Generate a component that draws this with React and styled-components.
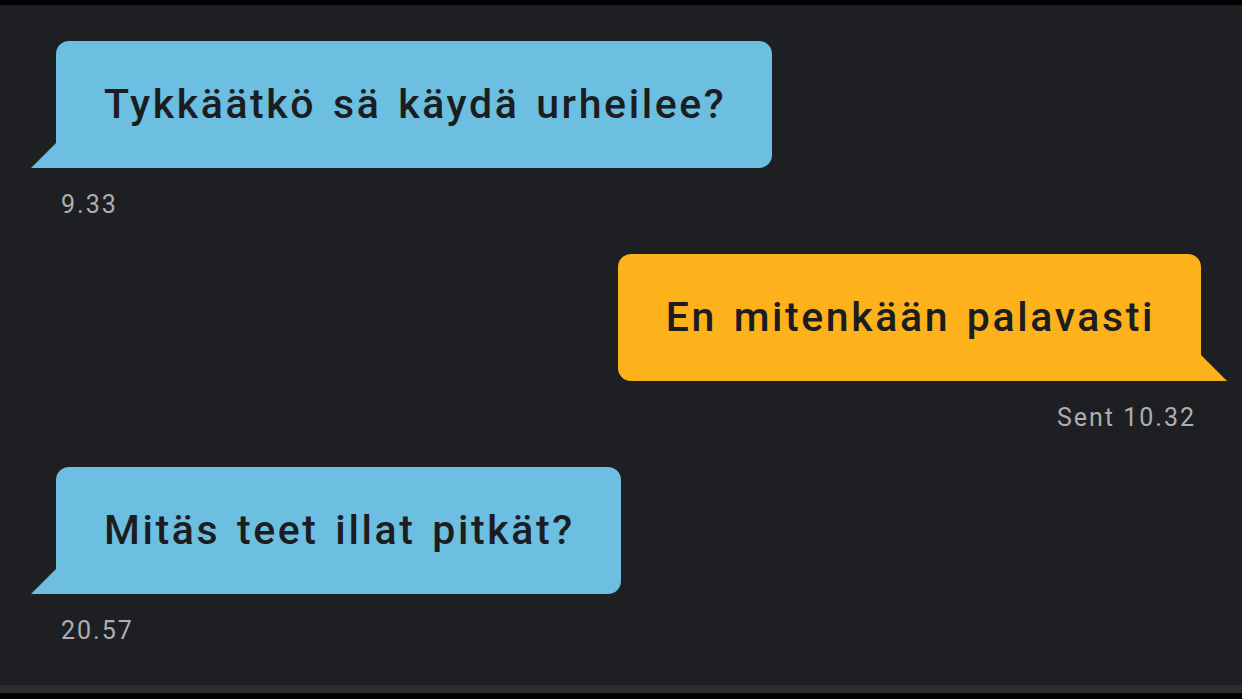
import styled, { createGlobalStyle } from "styled-components";

const GlobalStyle = createGlobalStyle`
    html, body {
        margin: 0;
        padding: 0;
        background: #000;
    }
`

const messages = [
    { id: 1, text: "Tykkäätkö sä käydä urheilee?", time: "9.33", mine: false },
    { id: 2, text: "En mitenkään palavasti", time: "Sent 10.32", mine: true },
    { id: 3, text: "Mitäs teet illat pitkät?", time: "20.57", mine: false },
];

const App = () => {
    return (
        <>
            <GlobalStyle />
            <Screen>
                <Thread>
                    {messages.map((m) => (
                        <Group key={m.id} $mine={m.mine}>
                            <Bubble $mine={m.mine}>{m.text}</Bubble>
                            <Meta>{m.time}</Meta>
                        </Group>
                    ))}
                </Thread>
                <Composer />
            </Screen>
        </>
    );
}

export default App;

const blue = "#6cbfe0";
const yellow = "#fdb21b";

const Screen = styled.div`
    display: flex;
    flex-direction: column;
    width: 1242px;
    height: 699px;
    box-sizing: border-box;
    border-top: 5px solid #000;
    background-color: #1d1f22;
    font-family: Roboto, "DejaVu Sans", sans-serif;
`

const Thread = styled.main`
    flex: 1;
    display: flex;
    flex-direction: column;
    gap: 34px;
    padding: 36px 41px 0 56px;
`

const Group = styled.section`
    display: flex;
    flex-direction: column;
    align-items: ${(p) => (p.$mine ? "flex-end" : "flex-start")};
`

const Bubble = styled.div`
    position: relative;
    display: flex;
    align-items: center;
    box-sizing: border-box;
    height: 127px;
    padding: 0 46px 2px 48px;
    border-radius: ${(p) => (p.$mine ? "13px 13px 0 13px" : "13px 13px 13px 0")};
    background-color: ${(p) => (p.$mine ? yellow : blue)};
    color: #1b1d20;
    font-size: 41px;
    font-weight: 500;
    letter-spacing: 2.6px;
    word-spacing: 4px;
    white-space: nowrap;

    /* pikku nokka kuplan alakulmassa */
    &::after {
        content: "";
        position: absolute;
        bottom: 0;
        width: 0;
        height: 0;
        ${(p) =>
            p.$mine
                ? `right: -26px;
                   border-bottom: 26px solid ${yellow};
                   border-right: 26px solid transparent;`
                : `left: -25px;
                   border-bottom: 25px solid ${blue};
                   border-left: 25px solid transparent;`}
    }
`

const Meta = styled.span`
    margin-top: 22px;
    padding: 0 5px;
    line-height: 30px;
    font-size: 25px;
    color: #aeaeae;
    letter-spacing: 2px;
`

const Composer = styled.footer`
    height: 8px;
    background-color: #2b2c2f;
    border-bottom: 6px solid #000;
`
